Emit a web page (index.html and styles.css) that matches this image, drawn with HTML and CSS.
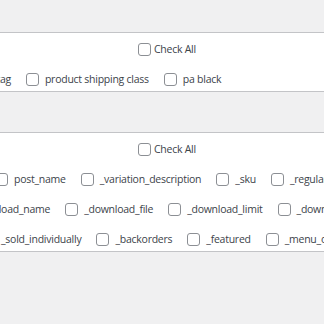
FILE: index.html
```html
<!DOCTYPE html>
<html lang="en">
<head>
  <meta charset="UTF-8" />
  <meta name="viewport" content="width=device-width, initial-scale=1.0"/>
  <title>Export Fields</title>
  <link rel="stylesheet" href="styles.css">
</head>
<body>
  <!-- taxonomy fields -->
  <section class="field-box">
    <div class="check-all">
      <label class="item item-all"><input type="checkbox"> Check All</label>
    </div>
    <div class="field-row shift-a">
      <label class="item"><input type="checkbox"> product tag</label>
      <label class="item"><input type="checkbox"> product shipping class</label>
      <label class="item"><input type="checkbox"> pa black</label>
    </div>
  </section>

  <!-- meta fields -->
  <section class="field-box">
    <div class="check-all">
      <label class="item item-all"><input type="checkbox"> Check All</label>
    </div>
    <div class="field-row shift-b">
      <label class="item"><input type="checkbox"> post_name</label>
      <label class="item"><input type="checkbox"> _variation_description</label>
      <label class="item"><input type="checkbox"> _sku</label>
      <label class="item"><input type="checkbox"> _regular_price</label>
    </div>
    <div class="field-row shift-c">
      <label class="item"><input type="checkbox"> _download_name</label>
      <label class="item"><input type="checkbox"> _download_file</label>
      <label class="item"><input type="checkbox"> _download_limit</label>
      <label class="item"><input type="checkbox"> _download_expiry</label>
    </div>
    <div class="field-row shift-d">
      <label class="item"><input type="checkbox"> _sold_individually</label>
      <label class="item"><input type="checkbox"> _backorders</label>
      <label class="item"><input type="checkbox"> _featured</label>
      <label class="item"><input type="checkbox"> _menu_order</label>
    </div>
  </section>
</body>
</html>
```

FILE: styles.css
```css
:root {
  --bg: #f0f0f1;
  --border: #c3c4c7;
  --text: #3c434a;
  --box: #8c8f94;
}

* {
  box-sizing: border-box;
  margin: 0;
  padding: 0;
}

body {
  background: var(--bg);
  font-family: 'Open Sans', 'Noto Sans', sans-serif;
  font-size: 10.5px;
  letter-spacing: -0.25px;
  line-height: 14px;
  color: var(--text);
  padding-top: 32px;
  overflow: hidden;
}

.field-box {
  background: #ffffff;
  border-top: 1px solid var(--border);
  border-bottom: 1px solid var(--border);
  padding: 9px 0 5px;
  display: flex;
  flex-direction: column;
  gap: 16px;
  margin-bottom: 40px;
  overflow: hidden;
}

.check-all {
  display: flex;
  padding-left: 138px;
}

.field-row {
  display: flex;
  white-space: nowrap;
}

/* rows are scrolled sideways in the screenshot */
.shift-a { margin-left: -62px; }
.shift-b { margin-left: -5px; }
.shift-c { margin-left: -51px; }
.shift-d { margin-left: -18px; }

.item {
  display: flex;
  align-items: center;
  gap: 6px;
  margin-right: 15px;
  flex: none;
}

.item-all {
  gap: 3px;
}

.item input {
  appearance: none;
  -webkit-appearance: none;
  width: 13px;
  height: 13px;
  border: 1px solid var(--box);
  border-radius: 3px;
  background: #ffffff;
  flex: none;
}
```
